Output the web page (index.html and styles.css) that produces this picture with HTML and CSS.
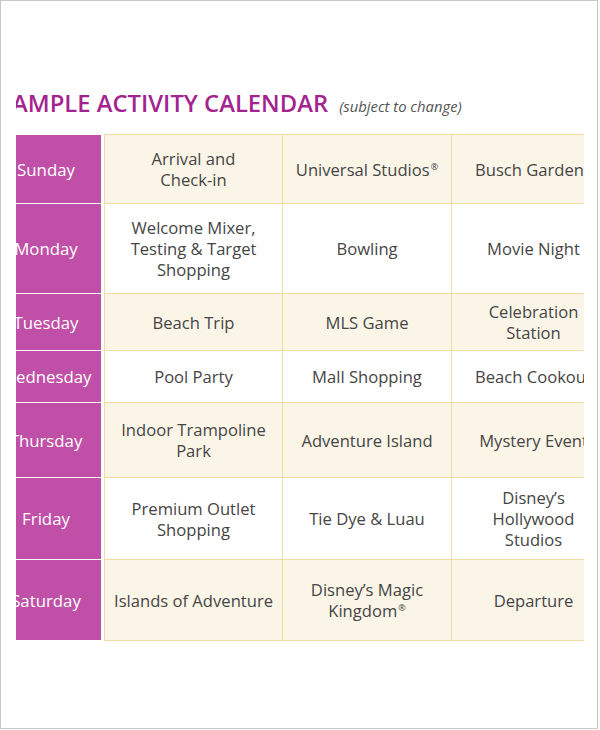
FILE: index.html
```html
<!DOCTYPE html>
<html lang="en">
<head>
<meta charset="utf-8">
<title>Sample Activity Calendar</title>
<link rel="stylesheet" href="styles.css">
</head>
<body>
<div class="frame">
  <div class="clip">
    <h1 class="title"><span class="title-main">SAMPLE ACTIVITY CALENDAR</span><span class="title-note">(subject to change)</span></h1>
    <div class="table">
      <div class="row cream h1">
        <div class="day"><span>Sunday</span></div>
        <div class="cell"><span>Arrival and<br>Check-in</span></div>
        <div class="cell"><span>Universal Studios<sup>®</sup></span></div>
        <div class="cell"><span>Busch Gardens</span></div>
      </div>
      <div class="row h2">
        <div class="day"><span>Monday</span></div>
        <div class="cell"><span>Welcome Mixer,<br>Testing &amp; Target<br>Shopping</span></div>
        <div class="cell"><span>Bowling</span></div>
        <div class="cell"><span>Movie Night</span></div>
      </div>
      <div class="row cream h3">
        <div class="day"><span>Tuesday</span></div>
        <div class="cell"><span>Beach Trip</span></div>
        <div class="cell"><span>MLS Game</span></div>
        <div class="cell"><span>Celebration<br>Station</span></div>
      </div>
      <div class="row h4">
        <div class="day"><span>Wednesday</span></div>
        <div class="cell"><span>Pool Party</span></div>
        <div class="cell"><span>Mall Shopping</span></div>
        <div class="cell"><span>Beach Cookout</span></div>
      </div>
      <div class="row cream h5">
        <div class="day"><span>Thursday</span></div>
        <div class="cell"><span>Indoor Trampoline<br>Park</span></div>
        <div class="cell"><span>Adventure Island</span></div>
        <div class="cell"><span>Mystery Event</span></div>
      </div>
      <div class="row h6">
        <div class="day"><span>Friday</span></div>
        <div class="cell"><span>Premium Outlet<br>Shopping</span></div>
        <div class="cell"><span>Tie Dye &amp; Luau</span></div>
        <div class="cell"><span>Disney’s<br>Hollywood<br>Studios</span></div>
      </div>
      <div class="row cream h7 last">
        <div class="day"><span>Saturday</span></div>
        <div class="cell"><span>Islands of Adventure</span></div>
        <div class="cell"><span>Disney’s Magic<br>Kingdom<sup>®</sup></span></div>
        <div class="cell"><span>Departure</span></div>
      </div>
    </div>
  </div>
</div>
</body>
</html>
```

FILE: styles.css
```css
* { box-sizing: border-box; }
html, body { margin: 0; padding: 0; background: #fff; }
body { font-family: "Open Sans", "Liberation Sans", sans-serif; }

.frame {
  width: 598px;
  height: 729px;
  border: 1px solid #c8c8c8;
  padding-left: 15px;
  padding-top: 83px;
}

.clip {
  width: 568px;
  overflow: hidden;
}

.title {
  margin: 0 0 0 -17px;
  white-space: nowrap;
  font-weight: 400;
  line-height: 32px;
  height: 50px;
}
.title-main {
  font-size: 23.8px;
  font-weight: 600;
  color: #a4248f;
}
.title-note {
  font-size: 14.8px;
  font-style: italic;
  color: #555;
  margin-left: 11px;
}

.table {
  margin-left: -25px;
  width: 624px;
}

.row {
  display: grid;
  grid-template-columns: 113px 178px 169px 164px;
}
.h1 { height: 69px; }
.h2 { height: 90px; }
.h3 { height: 57px; }
.h4 { height: 52px; }
.h5 { height: 75px; }
.h6 { height: 82px; }
.h7 { height: 82px; }

.day {
  margin: 1px 3px 0 0;
  background: #c050a7;
  color: #fff;
  font-size: 16.8px;
  display: flex;
  align-items: center;
  justify-content: center;
}
.last .day { margin-bottom: 1px; }

.cell {
  border-top: 1px solid #f3dca4;
  border-left: 1px solid #f3dca4;
  display: flex;
  align-items: center;
  justify-content: center;
  text-align: center;
  font-size: 16.6px;
  line-height: 21px;
  color: #454545;
  white-space: nowrap;
}
.cream .cell { background: #fbf5e8; }
.last .cell { border-bottom: 1px solid #f3dca4; }

sup {
  font-size: 9px;
  line-height: 0;
  vertical-align: 0;
  position: relative;
  top: -6px;
  margin-left: 1px;
}
```
